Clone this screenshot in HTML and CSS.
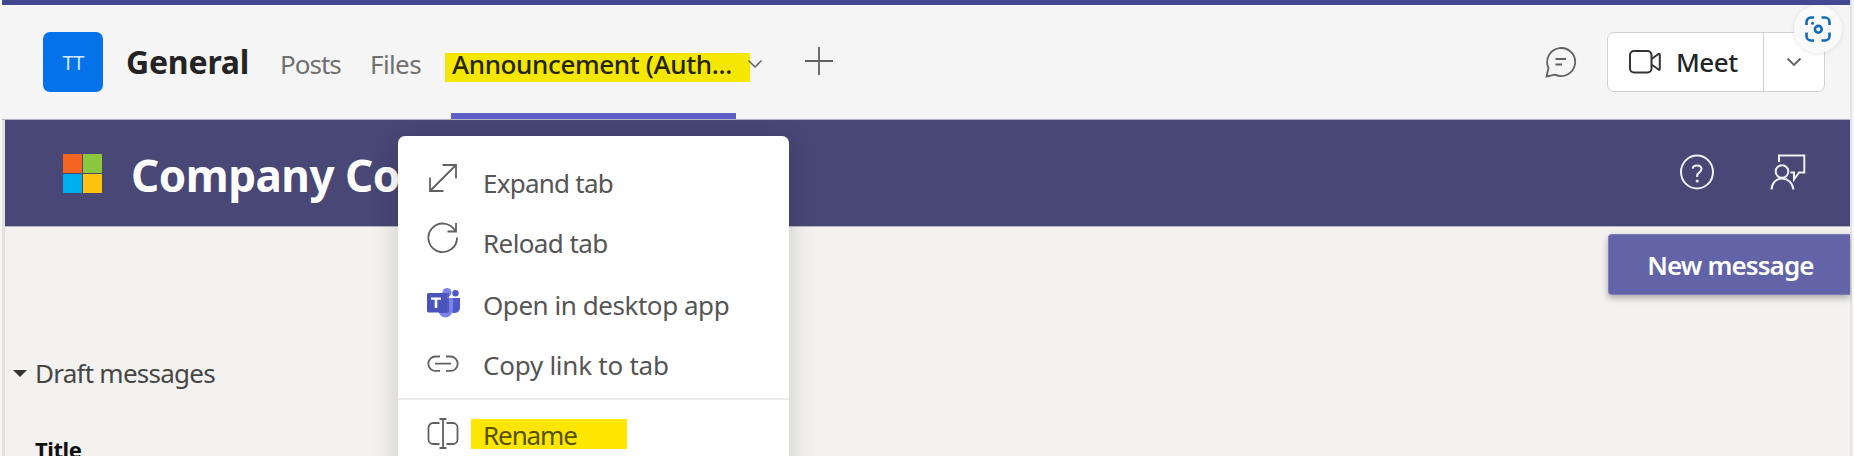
FILE: index.html
```html
<!DOCTYPE html>
<html lang="en">
<head>
<meta charset="utf-8">
<title>General - Company Communicator</title>
<link rel="stylesheet" href="styles.css">
</head>
<body>
<div class="window">
  <header class="channel">
    <div class="avatar">TT</div>
    <h1 class="channel-name">General</h1>
    <nav class="tabs">
      <a class="tab posts">Posts</a>
      <a class="tab files">Files</a>
      <a class="tab active"><span class="mark">Announcement (Auth...</span></a>
    </nav>
    <svg class="tab-chevron" width="16" height="10" viewBox="0 0 16 10"><path d="M1.5 1.5 8 8l6.500-6.500"/></svg>
    <svg class="plus" width="28" height="28" viewBox="0 0 28 28"><path d="M14 0v28M0 14h28"/></svg>
    <svg class="chat" width="32" height="32" viewBox="0 0 32 32"><path d="M1.500 30.500 3.500 22A14 14 0 1 1 10 28.600ZM10.500 13h10.500M10.500 18.500h6.500"/></svg>
    <div class="meet">
      <div class="meet-main">
        <svg width="32" height="24" viewBox="0 0 32 24"><rect x="1" y="1" width="21.500" height="21.500" rx="4"/><path d="m22.500 9 7-5q1.300-.700 1.300 1v13.500q0 1.700-1.300 1l-7-5"/></svg>
        <span>Meet</span>
      </div>
      <div class="meet-more"><svg width="16" height="10" viewBox="0 0 16 10"><path d="M1.500 1.500 8 8l6.500-6.500"/></svg></div>
    </div>
    <div class="lens">
      <svg width="26" height="26" viewBox="0 0 26 26"><path d="M1.500 9V6a4.500 4.500 0 0 1 4.500-4.500h3M16.500 1.500H20A4.500 4.500 0 0 1 24.500 6v3M24.500 16.500V20a4.500 4.500 0 0 1-4.500 4.500h-3.500M9 24.500H6A4.500 4.500 0 0 1 1.500 20v-3.500"/><circle cx="13.300" cy="13.300" r="3.400"/><circle class="dot" cx="7.500" cy="7.300" r="1.500"/></svg>
    </div>
  </header>
  <section class="banner">
    <div class="ms"><i class="red"></i><i class="green"></i><i class="blue"></i><i class="gold"></i></div>
    <h2>Company Communicator</h2>
    <div class="banner-icons">
      <svg width="34" height="36" viewBox="0 0 34 36"><ellipse cx="17" cy="18" rx="16" ry="16.500"/><path d="M12.700 14.700c.200-2.300 2-3.300 4.300-3.300 2.600 0 4.500 1.400 4.500 3.700 0 3.400-4.300 3.200-4.300 6.700v1.200"/><circle class="dot" cx="17.200" cy="27" r="1.600"/></svg>
      <svg width="36" height="36" viewBox="0 0 36 36"><path d="M9 8V1.500h25.300v17H29l-5 7v-7h-3.500"/><circle cx="12" cy="17.500" r="6.300"/><path d="M1.500 35.500C2 28.500 6.500 24.500 12 24.500s10.500 4 11.500 11"/></svg>
    </div>
  </section>
  <main class="content">
    <button class="new-message">New message</button>
    <div class="drafts"><svg width="14" height="8" viewBox="0 0 14 8"><path d="M0 0h14L7 7Z"/></svg><span>Draft messages</span></div>
    <div class="column-title">Title</div>
  </main>
  <div class="menu">
    <div class="item raised"><svg width="32" height="32" viewBox="0 0 32 32"><path d="M15.500 3H29v13.500M3 15.500V29h13.500M3 29 29 3"/></svg><span class="expand">Expand tab</span></div>
    <div class="item raised"><svg width="32" height="32" viewBox="0 0 32 32"><path d="M30 15.500A14.300 14.300 0 1 1 28 8.500M20.500 9.500h8.500V1"/></svg><span class="reload">Reload tab</span></div>
    <div class="item gap"><svg class="teams" width="34" height="30" viewBox="0 0 34 30">
      <circle fill="#7b83eb" cx="20" cy="4.500" r="4.500"/><circle fill="#5059c9" cx="28.500" cy="5.200" r="3.200"/>
      <path fill="#5059c9" d="M23 10h10v9.500a5.500 5.500 0 0 1-8 5Z"/><path fill="#7b83eb" d="M11 10h15v11a7.500 8.500 0 0 1-15 0Z"/>
      <path fill="#3d44a2" opacity=".65" d="M13 5h9v18q0 2-2 2h-8Z"/><rect fill="#4b53bc" x="0" y="5" width="20" height="19.500" rx="1.500"/>
      <path fill="#fff" d="M4 9.500h10v2.300h-3.700V20H7.700v-8.200H4Z"/></svg><span class="open">Open in desktop app</span></div>
    <div class="item"><svg width="32" height="32" viewBox="0 0 32 32"><path d="M13 8.500H8.500a7.200 7.200 0 0 0 0 14.400H13M19 8.500h4.500a7.200 7.200 0 0 1 0 14.400H19M8 15.700h16"/></svg><span class="copy">Copy link to tab</span></div>
    <hr>
    <div class="item"><svg width="32" height="32" viewBox="0 0 32 32"><path d="M12.500 5H6a4.500 4.500 0 0 0-4.500 4.500v12A4.500 4.500 0 0 0 6 26h6.500M19.500 5H26a4.500 4.500 0 0 1 4.500 4.500v12A4.500 4.500 0 0 1 26 26h-6.500M16 1v29M12.500 1h7M12.500 30h7"/></svg><span class="mark rename">Rename</span></div>
  </div>
</div>
</body>
</html>
```
FILE: styles.css
```css
* { box-sizing: border-box; }
body {
  margin: 0;
  height: 456px;
  overflow: hidden;
  background: #f6f6f6;
  font-family: "Noto Sans", "Open Sans", sans-serif;
  font-size: 26px;
}
svg { display: block; flex: none; fill: none; stroke: #616161; stroke-width: 1.8; }
h1, h2 { margin: 0; }
span, a, h1, h2 { white-space: nowrap; }

.window {
  position: relative;
  height: 456px;
  margin: 0 2px;
  padding: 0 2px 0 3px;
  background: #e3e3e3;
  overflow: hidden;
}
.channel {
  position: relative;
  display: flex;
  align-items: center;
  height: 120px;
  margin: 0 0 0 -3px;
  padding-left: 41px;
  border-top: 5px solid #444791;
  border-bottom: 1px solid #b4b4c4;
  background: #f5f5f5;
}
.avatar {
  width: 60px;
  height: 60px;
  border-radius: 7px;
  background: #0473ea;
  color: #d5e8ff;
  font-size: 20px;
  line-height: 62px;
  text-align: center;
  letter-spacing: -.8px;
}
.channel-name {
  width: 177px;
  padding-left: 23px;
  color: #242424;
  font-size: 32px;
  line-height: 44px;
  letter-spacing: -.2px;
}
.tabs { display: flex; align-self: stretch; color: #707070; }
.tab { padding-top: 3px; line-height: 113px; letter-spacing: -1px; }
.posts { width: 90px; }
.files { width: 75px; letter-spacing: -.6px; }
.active {
  display: flex;
  flex-direction: column;
  width: 305px;
  padding-top: 48px;
  color: #242400;
  font-weight: 500;
  letter-spacing: -.35px;
}
.active::after {
  content: "";
  width: 285px;
  height: 6px;
  margin: auto 0 0 6px;
  background: #5b5fc7;
}
.mark { background: #f5e700; }
.active .mark {
  height: 29px;
  padding-left: 7px;
  line-height: 22px;
}
.tab-chevron { margin: 4px 0 0 -3px; stroke-width: 1.500; }
.plus { margin: -2px 0 0 42px; }
.chat { margin-left: auto; }
.meet {
  display: flex;
  width: 218px;
  height: 60px;
  margin: 0 25px 0 30px;
  border: 1px solid #d1d1d1;
  border-radius: 7px;
  background: #fff;
}
.meet-main {
  display: flex;
  align-items: center;
  gap: 15px;
  width: 156px;
  padding-left: 21px;
  border-right: 1px solid #d1d1d1;
  color: #242424;
  font-weight: 500;
  letter-spacing: -.5px;
}
.meet-main svg { stroke: #333; stroke-width: 2; }
.meet-more { display: grid; flex: 1; place-items: center; }
.lens {
  position: absolute;
  top: 0;
  right: 8px;
  display: grid;
  place-items: center;
  width: 48px;
  height: 48px;
  border-radius: 50%;
  background: #fafafa;
  box-shadow: 0 1px 5px rgba(0, 0, 0, .1);
}
.lens svg { stroke: #0f6cbd; stroke-width: 2.600; }
.lens .dot { fill: #0f6cbd; stroke: none; }

.banner {
  display: flex;
  align-items: center;
  height: 107px;
  padding: 0 44px 0 58px;
  border-bottom: 1px solid #b4b4c4;
  background: #484775;
  color: #fff;
}
.ms { display: grid; grid-template-columns: 19px 19px; gap: 1px; width: 39px; }
.ms i { height: 19px; }
.red { background: #f26522; }
.green { background: #8dc63f; }
.blue { background: #00aeef; }
.gold { background: #ffc20e; }
.banner h2 { margin-left: 29px; padding-top: 4px; font-size: 44px; line-height: 58px; letter-spacing: -.5px; }
.banner-icons { display: flex; gap: 56px; margin: -2px 0 0 auto; }
.banner svg { stroke: #f0f0f8; stroke-width: 2; }
.banner .dot { fill: #f0f0f8; stroke: none; }

.content { height: 229px; padding-top: 7px; background: #f3f2f1; }
.new-message {
  display: block;
  width: 242px;
  height: 61px;
  margin-left: auto;
  padding: 1px 0 0 2px;
  border: 1px solid #7d7dba;
  border-right: 0;
  border-radius: 4px 0 0 4px;
  background: #6264a7;
  box-shadow: 0 3px 7px rgba(0, 0, 0, .3);
  color: #fff;
  font: 600 26px "Noto Sans", "Open Sans", sans-serif;
  letter-spacing: -.9px;
}
.drafts {
  display: flex;
  align-items: center;
  gap: 8px;
  height: 40px;
  margin-top: 57px;
  padding-left: 8px;
  color: #484644;
  letter-spacing: -.75px;
}
.drafts svg { margin-top: 3px; fill: #333; stroke: none; }
.drafts span { padding-top: 2px; }
.column-title {
  margin-top: 42px;
  padding-left: 30px;
  color: #111;
  font-size: 22px;
  font-weight: 700;
  line-height: 30px;
  letter-spacing: -.4px;
}

.menu {
  position: absolute;
  top: 136px;
  left: 396px;
  width: 391px;
  height: 340px;
  padding-top: 16px;
  border-radius: 7px;
  background: #fff;
  box-shadow: 0 8px 28px rgba(0, 0, 0, .17);
}
.item {
  display: flex;
  align-items: center;
  gap: 24px;
  height: 60px;
  padding-left: 29px;
  color: #555;
  letter-spacing: -.75px;
}
.item span { padding-top: 1px; }
.item .reload { letter-spacing: -.6px; }
.item .open { letter-spacing: -.45px; }
.item .copy { letter-spacing: -.25px; }
.raised svg { margin-top: -8px; }
.gap { margin-top: 2px; }
.item .teams { margin: -2px -2px 0 0; }
.teams { stroke: none; }
.menu hr { height: 2px; margin: 4px 0; border: 0; background: #ebebeb; }
.item .rename {
  width: 156px;
  height: 30px;
  margin-left: -12px;
  padding: 0 0 0 12px;
  background: #ffe600;
  color: #555100;
  line-height: 32px;
  letter-spacing: -1.1px;
}
```
